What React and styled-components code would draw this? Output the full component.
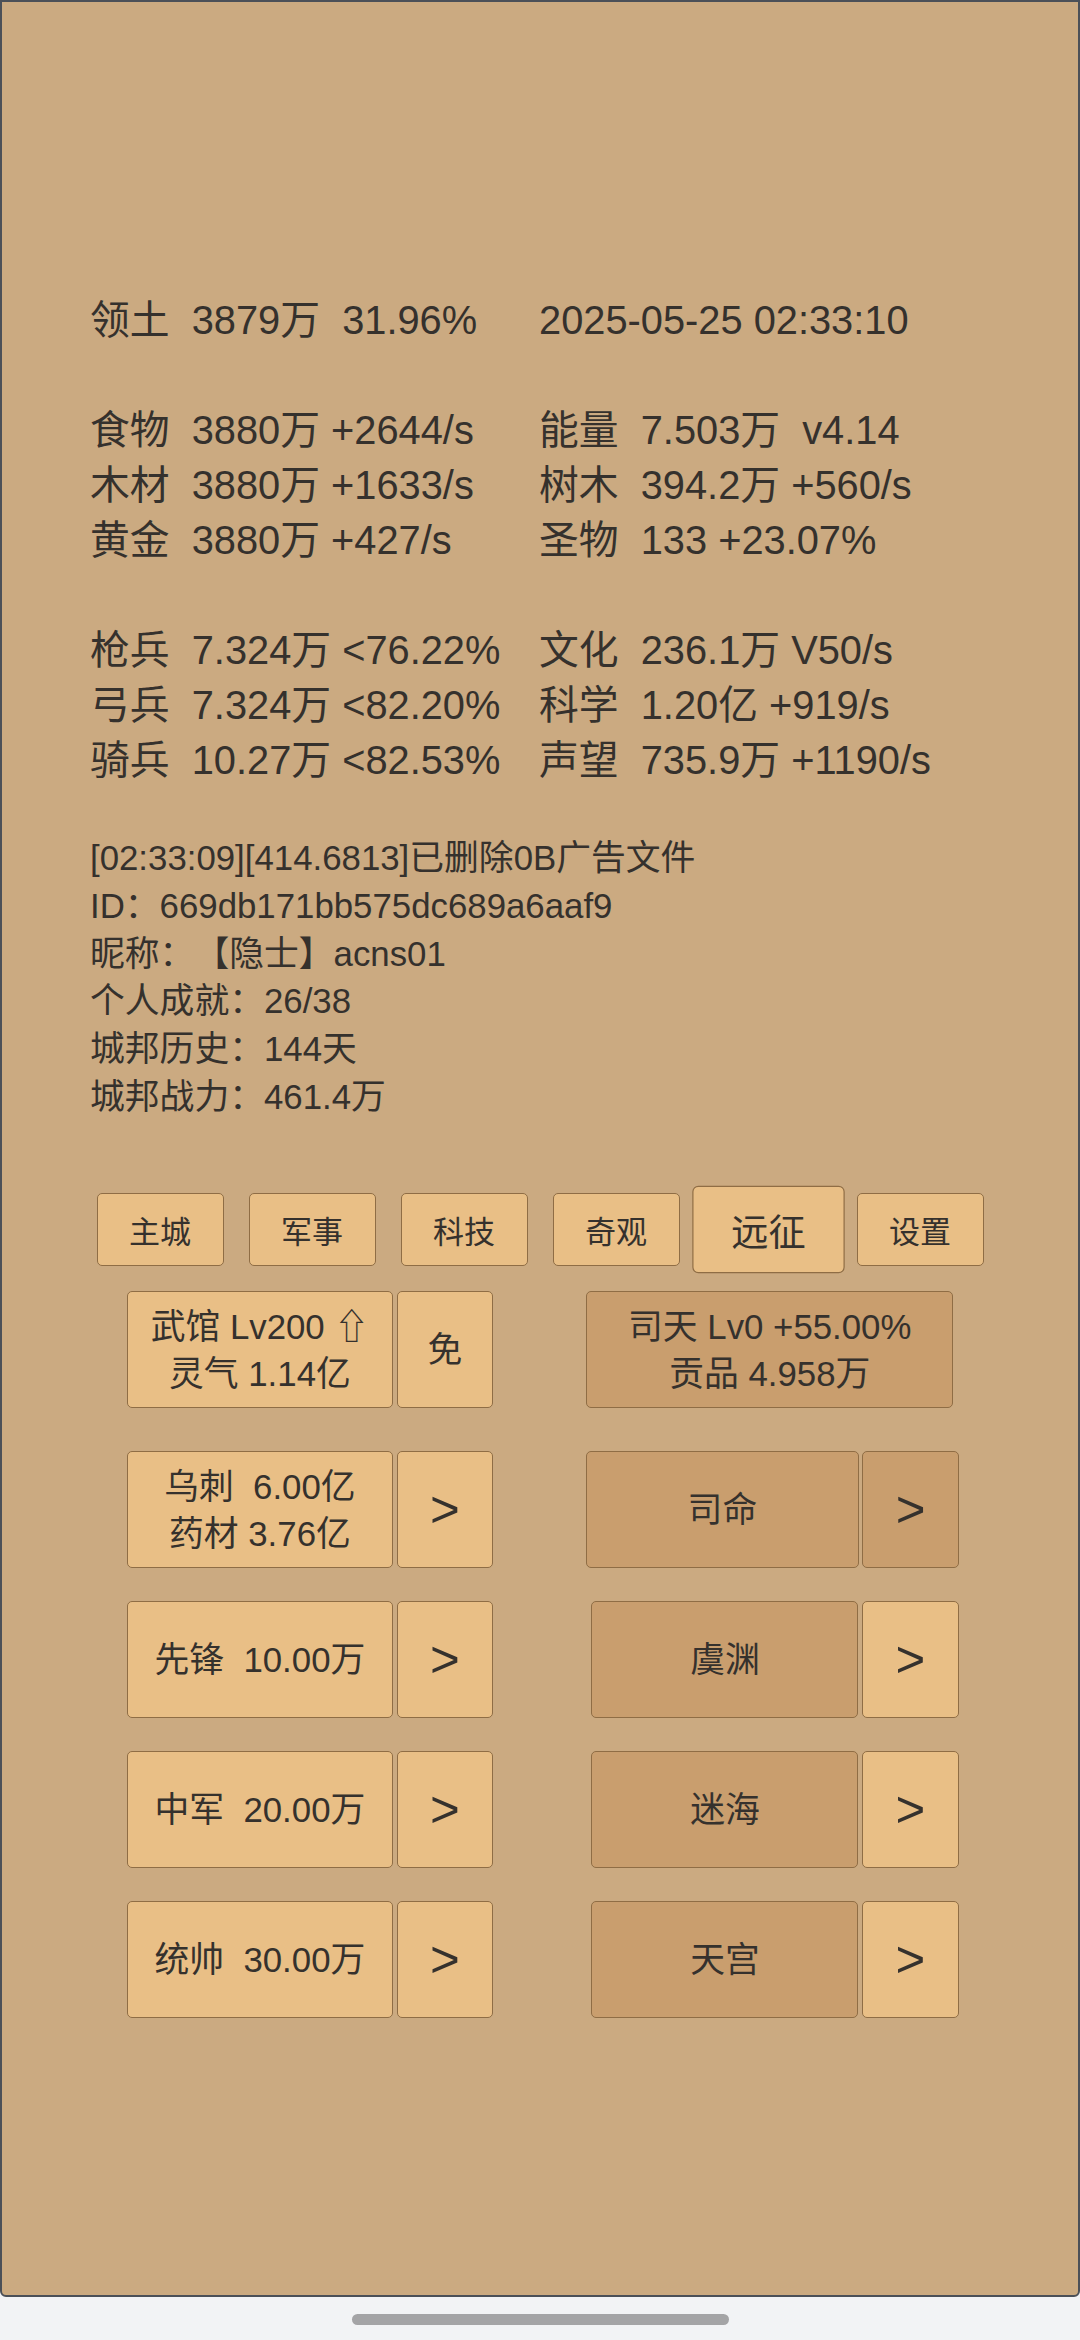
import React from 'react';
import styled, { createGlobalStyle } from 'styled-components';

const GlobalStyle = createGlobalStyle`
  html, body {
    margin: 0;
    padding: 0;
    background: #f2f3f5;
  }
  body {
    font-family: "Liberation Sans", "Noto Sans CJK SC", sans-serif;
    color: #35312d;
    text-spacing-trim: space-all;
  }
`;

const Screen = styled.div`
  width: 1080px;
  height: 2340px;
  display: flex;
  flex-direction: column;
  overflow: hidden;
`;

const Frame = styled.div`
  box-sizing: border-box;
  width: 1080px;
  height: 2297px;
  flex: none;
  background: #cbaa81;
  border: 2px solid #4b5058;
  border-radius: 0 0 6px 6px;
  padding-top: 291px;
`;

const TextArea = styled.div`
  padding-left: 88px;
`;

const StatsGrid = styled.div`
  display: grid;
  grid-template-columns: 449px 1fr;
  grid-auto-rows: 55px;
  font-size: 39.8px;
  line-height: 55px;
  white-space: pre;
`;

const Info = styled.div`
  margin-top: 46px;
  font-size: 34.8px;
  line-height: 47.8px;
  white-space: pre;
`;

const Tabs = styled.div`
  margin-top: 72px;
  display: flex;
  justify-content: center;
  gap: 25px;
`;

const Tab = styled.div`
  box-sizing: border-box;
  width: 127px;
  height: 73px;
  display: flex;
  align-items: center;
  justify-content: center;
  background: #e9bf86;
  border: 1.5px solid #8f6d45;
  border-radius: 5px;
  font-size: 31px;
  transform: ${({ $active }) => ($active ? 'scale(1.2)' : 'none')};
`;

const Buildings = styled.div`
  margin-top: 25.5px;
  display: flex;
  flex-direction: column;
  gap: 33.3px;
`;

const Row = styled.div`
  display: flex;
  padding-left: 124.5px;
  margin-bottom: ${({ $extra }) => $extra || 0}px;
`;

const Group = styled.div`
  display: flex;
  gap: 3.3px;
  margin-left: ${({ $offset }) => $offset || 0}px;
`;

const Cell = styled.div`
  box-sizing: border-box;
  width: ${({ $w }) => $w}px;
  height: 116.7px;
  display: flex;
  flex-direction: column;
  align-items: center;
  justify-content: center;
  background: ${({ $dark }) => ($dark ? '#c99e6e' : '#e9bf86')};
  border: 1.5px solid #8f6d45;
  border-radius: 5px;
  font-size: 34.8px;
  line-height: 47px;
  white-space: pre;
`;

const Arrow = styled(Cell)`
  font-size: 51px;
`;

const HomeArea = styled.div`
  flex: 1;
  display: flex;
  justify-content: center;
  padding-top: 17px;
`;

const HomeBar = styled.div`
  width: 377px;
  height: 11px;
  border-radius: 6px;
  background: #a4a4a6;
`;

const stats = [
  ['领土  3879万  31.96%', '2025-05-25 02:33:10'],
  ['', ''],
  ['食物  3880万 +2644/s', '能量  7.503万  v4.14'],
  ['木材  3880万 +1633/s', '树木  394.2万 +560/s'],
  ['黄金  3880万 +427/s', '圣物  133 +23.07%'],
  ['', ''],
  ['枪兵  7.324万 <76.22%', '文化  236.1万 V50/s'],
  ['弓兵  7.324万 <82.20%', '科学  1.20亿 +919/s'],
  ['骑兵  10.27万 <82.53%', '声望  735.9万 +1190/s'],
];

const info = [
  '[02:33:09][414.6813]已删除0B广告文件',
  'ID：669db171bb575dc689a6aaf9',
  '昵称：【隐士】acns01',
  '个人成就：26/38',
  '城邦历史：144天',
  '城邦战力：461.4万',
];

const tabs = ['主城', '军事', '科技', '奇观', '远征', '设置'];

const rows = [
  {
    left: ['武馆 Lv200 ⇧', '灵气 1.14亿'],
    leftBtn: '免',
    right: ['司天 Lv0 +55.00%', '贡品 4.958万'],
    rightW: 367.3,
    offset: 92.7,
    extra: 10,
  },
  {
    left: ['乌刺  6.00亿', '药材 3.76亿'],
    leftBtn: '>',
    right: ['司命'],
    rightW: 272.7,
    rightBtn: '>',
    rightBtnDark: true,
    offset: 92.7,
  },
  { left: ['先锋  10.00万'], leftBtn: '>', right: ['虞渊'], rightW: 267, rightBtn: '>', offset: 98.1 },
  { left: ['中军  20.00万'], leftBtn: '>', right: ['迷海'], rightW: 267, rightBtn: '>', offset: 98.1 },
  { left: ['统帅  30.00万'], leftBtn: '>', right: ['天宫'], rightW: 267, rightBtn: '>', offset: 98.1 },
];

export default function App() {
  return (
    <Screen>
      <GlobalStyle />
      <Frame>
        <TextArea>
          <StatsGrid>
            {stats.map(([l, r], i) => (
              <React.Fragment key={i}>
                <div>{l}</div>
                <div>{r}</div>
              </React.Fragment>
            ))}
          </StatsGrid>
          <Info>
            {info.map((line) => (
              <div key={line}>{line}</div>
            ))}
          </Info>
        </TextArea>
        <Tabs>
          {tabs.map((t) => (
            <Tab key={t} $active={t === '远征'}>{t}</Tab>
          ))}
        </Tabs>
        <Buildings>
          {rows.map((row, i) => (
            <Row key={i} $extra={row.extra}>
              <Group>
                <Cell $w={266.8}>
                  {row.left.map((l) => <div key={l}>{l}</div>)}
                </Cell>
                {row.leftBtn === '>' ? (
                  <Arrow $w={96.8}>&gt;</Arrow>
                ) : (
                  <Cell $w={96.8}>{row.leftBtn}</Cell>
                )}
              </Group>
              <Group $offset={row.offset}>
                <Cell $w={row.rightW} $dark>
                  {row.right.map((l) => <div key={l}>{l}</div>)}
                </Cell>
                {row.rightBtn && (
                  <Arrow $w={97} $dark={row.rightBtnDark}>&gt;</Arrow>
                )}
              </Group>
            </Row>
          ))}
        </Buildings>
      </Frame>
      <HomeArea>
        <HomeBar />
      </HomeArea>
    </Screen>
  );
}
